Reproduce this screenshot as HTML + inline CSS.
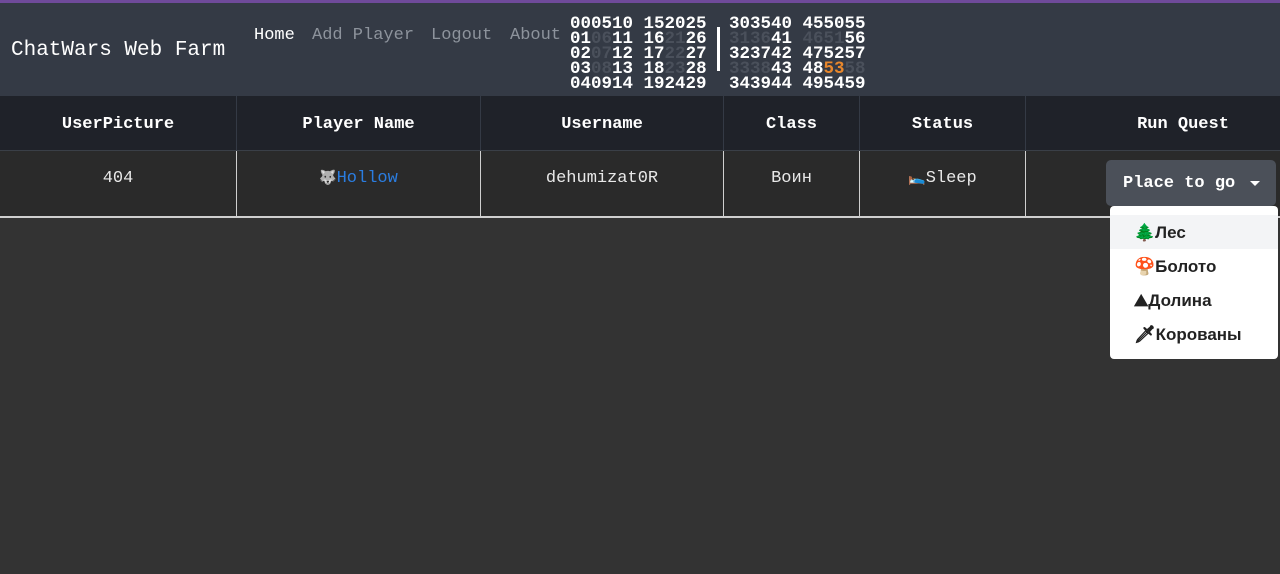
<!DOCTYPE html>
<html><head><meta charset="utf-8"><style>
body{margin:0;width:1280px;height:574px;background:#333333;font-family:"Liberation Mono",monospace;color:#e8e8e8;overflow:hidden;position:relative}
.top{position:absolute;left:0;top:0;width:1280px;height:3px;background:#6f4a9a}
.hdr{position:absolute;left:0;top:3px;width:1280px;height:93px;background:#343a45}
.a{position:absolute;white-space:pre}
.brand{left:11px;top:39px;font-size:21px;color:#fff}
.nav{top:26px;font-size:17px;color:#8d939c}
.clk{font-size:17.5px;font-weight:bold;line-height:15px;color:#fff;top:17px}
.clk .f{color:#4a505b}
.clk .o{color:#e8872c}
table{position:absolute;left:0;top:96px;width:1280px;border-collapse:collapse}
th{background:#1f2229;height:52px;font-size:17px;font-weight:bold;color:#fff;border-left:1px solid #343a45;border-bottom:1px solid #3a3f47;padding:2px 0 0}
td{background:#2a2a2a;height:66px;font-size:17px;text-align:center;vertical-align:top;padding-top:18px;box-sizing:border-box;border-left:1px solid #cfcfcf;border-bottom:2px solid #cfcfcf}
th:first-child,td:first-child{border-left:none}
.btn{position:absolute;left:1106px;top:160px;width:170px;height:46px;background:#4b5059;border-radius:5px;color:#fff;font-weight:bold;font-size:17px;line-height:48px;box-sizing:border-box;padding-left:17px}
.car{position:absolute;left:1250px;top:181px;border-left:5px solid transparent;border-right:5px solid transparent;border-top:5px solid #fff}
.dd{position:absolute;left:1110px;top:206px;width:168px;height:153px;background:#fff;border-radius:4px}
.it{position:absolute;left:0;width:168px;height:34px;line-height:36px;font-family:"Liberation Sans",sans-serif;font-weight:bold;font-size:17px;color:#222;padding-left:24px;box-sizing:border-box}
</style></head><body>
<div class="top"></div><div class="hdr"></div>
<div class="a brand">ChatWars Web Farm</div>
<div class="a nav" style="left:254px;color:#fff">Home</div>
<div class="a nav" style="left:312px">Add Player</div>
<div class="a nav" style="left:431px">Logout</div>
<div class="a nav" style="left:510px">About</div>
<div class="a clk" style="left:570px">000510 152025
01<span class="f">06</span>11 16<span class="f">21</span>26
02<span class="f">07</span>12 17<span class="f">22</span>27
03<span class="f">08</span>13 18<span class="f">23</span>28
040914 192429</div>
<div class="a" style="left:717px;top:27px;width:3px;height:44px;background:#fff"></div>
<div class="a clk" style="left:729px"><span>303540 455055</span>
<span class="f">3136</span>41 <span class="f">4651</span>56
323742 475257
<span class="f">3338</span>43 48<span class="o">53</span><span class="f">58</span>
343944 495459</div>
<table><tr><th style="width:236px">UserPicture</th><th style="width:243px">Player Name</th><th style="width:242px">Username</th><th style="width:135px">Class</th><th style="width:165px">Status</th><th style="padding-left:60px">Run Quest</th></tr>
<tr><td>404</td><td><span style="font-size:14px">🐺</span><span style="color:#2a7de1">Hollow</span></td><td>dehumizat0R</td><td>Воин</td><td><span style="font-size:14px">🛌</span>Sleep</td><td></td></tr></table>
<div class="btn">Place to go</div><div class="car"></div>
<div class="dd">
<div class="it" style="top:9px;background:#f3f4f6">🌲Лес</div>
<div class="it" style="top:43px">🍄Болото</div>
<div class="it" style="top:77px">⛰Долина</div>
<div class="it" style="top:111px">🗡Корованы</div>
</div>
</body></html>
